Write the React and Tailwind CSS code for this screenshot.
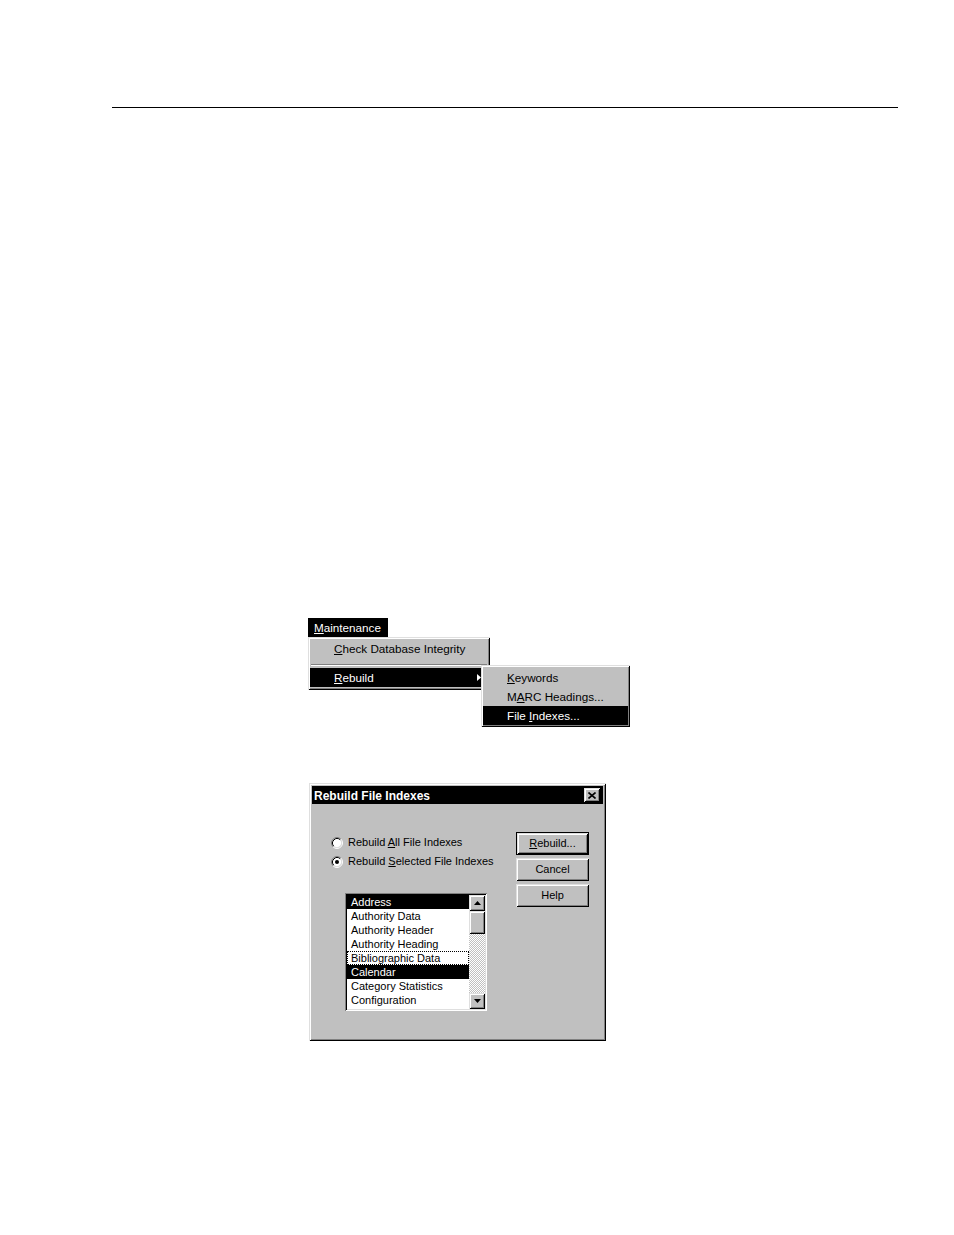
import React from 'react'

const raised = "shadow-[inset_1px_1px_#dfdfdf,inset_-1px_-1px_#000,inset_2px_2px_#fff,inset_-2px_-2px_#808080]"
const sunken = "shadow-[inset_1px_1px_#808080,inset_-1px_-1px_#fff,inset_2px_2px_#000,inset_-2px_-2px_#dfdfdf]"

function Radio({ checked }) {
    return (
        <svg width="12" height="12" viewBox="0 0 12 12">
            <circle cx="6" cy="6" r="4.5" fill="#fff" />
            <path d="M9.89 2.11 A5.5 5.5 0 0 0 2.11 9.89" stroke="#808080" fill="none" />
            <path d="M2.11 9.89 A5.5 5.5 0 0 0 9.89 2.11" stroke="#fff" fill="none" />
            <path d="M9.18 2.82 A4.5 4.5 0 0 0 2.82 9.18" stroke="#000" fill="none" />
            <path d="M2.82 9.18 A4.5 4.5 0 0 0 9.18 2.82" stroke="#dfdfdf" fill="none" />
            {checked && <circle cx="6" cy="6" r="2" fill="#000" />}
        </svg>
    )
}

function Arrow({ up }) {
    return (
        <div className={"w-[16px] h-[16px] bg-[#c0c0c0] flex items-center justify-center " + raised}>
            <svg width="7" height="4" viewBox="0 0 7 4">
                {up ? <polygon points="0,4 3.5,0 7,4" fill="#000" /> : <polygon points="0,0 3.5,4 7,0" fill="#000" />}
            </svg>
        </div>
    )
}

const files = [
    { name: "Address", sel: true },
    { name: "Authority Data" },
    { name: "Authority Header" },
    { name: "Authority Heading" },
    { name: "Bibliographic Data", focus: true },
    { name: "Calendar", sel: true },
    { name: "Category Statistics" },
    { name: "Configuration" },
]

function MenuBlock() {
    return (
        <div className="relative ml-[308px] mt-[510px] w-[322px] text-[11.7px]">
            <div className="w-[80px] h-[19px] bg-black text-white pl-[6px] leading-[19px]">
                <u>M</u>aintenance
            </div>
            <div className={"w-[182px] h-[53px] bg-[#c0c0c0] p-[2px] " + raised}>
                <div className="h-[23px] pl-[24px] pt-[1px] leading-[18px]">
                    <u>C</u>heck Database Integrity
                </div>
                <div className="h-[6px] flex flex-col justify-center px-[1px]">
                    <div className="h-px bg-[#808080]" />
                    <div className="h-px bg-white" />
                </div>
                <div className="h-[19px] bg-black text-white pl-[24px] leading-[19px] flex items-center justify-between pr-[7px]">
                    <span><u>R</u>ebuild</span>
                    <svg width="4" height="7" viewBox="0 0 4 7">
                        <polygon points="0,0 4,3.5 0,7" fill="#fff" />
                    </svg>
                </div>
            </div>
            {/* submenu, drawn over the main menu */}
            <div className={"absolute left-[173px] top-[47px] w-[149px] h-[62px] bg-[#c0c0c0] p-[2px] pt-[3px] " + raised}>
                <div className="h-[19px] pl-[24px] leading-[19px]"><u>K</u>eywords</div>
                <div className="h-[19px] pl-[24px] leading-[19px]">M<u>A</u>RC Headings...</div>
                <div className="h-[19px] pl-[24px] leading-[19px] bg-black text-white">File <u>I</u>ndexes...</div>
            </div>
        </div>
    )
}

function Dialog() {
    return (
        <div className={"ml-[309px] mt-[93px] w-[297px] h-[258px] bg-[#c0c0c0] p-[3px] text-[11px] " + raised}>
            <div className="h-[18px] bg-black text-white font-bold text-[12px] flex items-center justify-between pl-[2px] pr-[3px]">
                <span className="pt-[1px]">Rebuild File Indexes</span>
                <div className={"w-[16px] h-[14px] bg-[#c0c0c0] flex items-center justify-center " + raised}>
                    <svg width="8" height="7" viewBox="0 0 8 7">
                        <path d="M0.5 0.5 L7.5 6.5 M7.5 0.5 L0.5 6.5" stroke="#000" strokeWidth="1.6" />
                    </svg>
                </div>
            </div>
            <div className="flex pt-[28px]">
                <div className="w-[204px] pl-[19px] pt-[1px]">
                    <div className="h-[19px] flex items-center gap-[5px]">
                        <Radio />
                        <span>Rebuild <u>A</u>ll File Indexes</span>
                    </div>
                    <div className="h-[19px] flex items-center gap-[5px]">
                        <Radio checked />
                        <span>Rebuild <u>S</u>elected File Indexes</span>
                    </div>
                    <div className={"ml-[14px] mt-[22px] w-[142px] h-[118px] bg-white p-[2px] flex " + sunken}>
                        <div className="w-[122px]">
                            {files.map((f) => (
                                <div
                                    key={f.name}
                                    className={
                                        "h-[14px] leading-[14px] pl-[4px] whitespace-nowrap " +
                                        (f.sel ? "bg-black text-white " : "") +
                                        (f.focus ? "outline outline-1 outline-dotted outline-black -outline-offset-1" : "")
                                    }
                                >
                                    {f.name}
                                </div>
                            ))}
                        </div>
                        <div className="w-[16px] flex flex-col bg-[repeating-conic-gradient(#c0c0c0_0_25%,#fff_0_50%)] bg-[length:2px_2px]">
                            <Arrow up />
                            <div className={"w-[16px] h-[23px] bg-[#c0c0c0] " + raised} />
                            <div className="flex-1" />
                            <Arrow />
                        </div>
                    </div>
                </div>
                <div className="flex flex-col gap-[3px] w-[73px]">
                    <div className="border border-black">
                        <div className={"h-[21px] bg-[#c0c0c0] flex items-center justify-center " + raised}>
                            <span><u>R</u>ebuild...</span>
                        </div>
                    </div>
                    <div className={"h-[23px] bg-[#c0c0c0] flex items-center justify-center " + raised}>Cancel</div>
                    <div className={"h-[23px] bg-[#c0c0c0] flex items-center justify-center " + raised}>Help</div>
                </div>
            </div>
        </div>
    )
}

export default function App() {
    return (
        <div className="w-[954px] h-[1235px] bg-white text-black font-['Liberation_Sans',Arial,sans-serif] overflow-hidden">
            <div className="pt-[107px] pl-[112px]">
                <div className="w-[786px] h-px bg-black" />
            </div>
            <MenuBlock />
            <Dialog />
        </div>
    )
}
